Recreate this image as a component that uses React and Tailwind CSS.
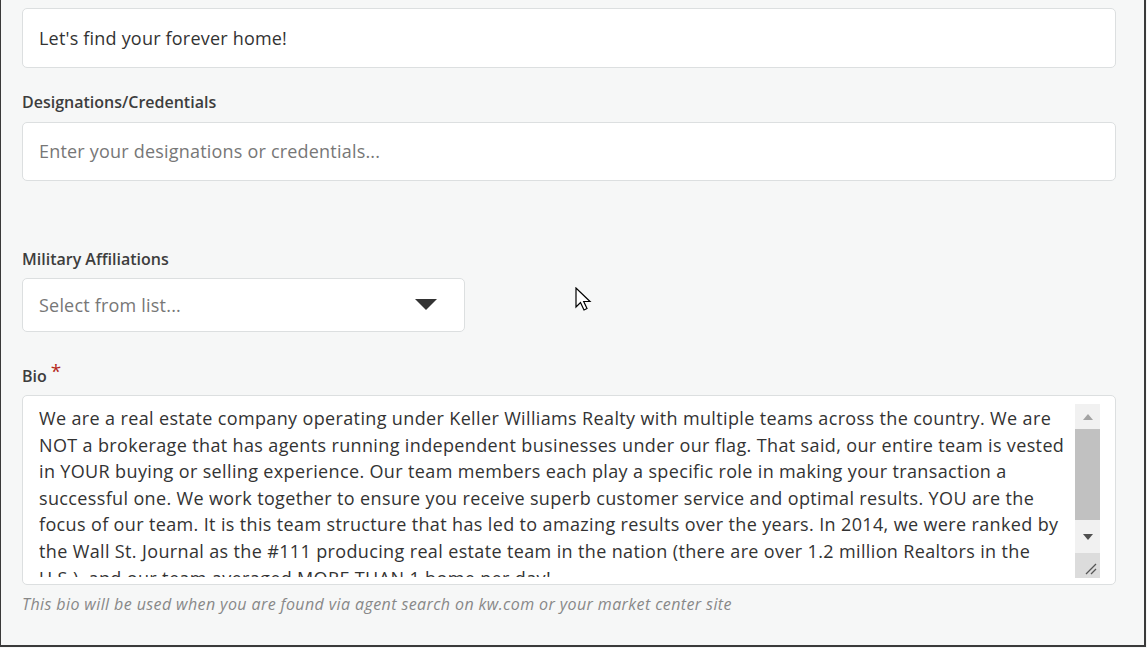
import React from "react";

const font = { fontFamily: "'Open Sans', sans-serif" };

const lines = [
  "We are a real estate company operating under Keller Williams Realty with multiple teams across the country. We are",
  "NOT a brokerage that has agents running independent businesses under our flag. That said, our entire team is vested",
  "in YOUR buying or selling experience. Our team members each play a specific role in making your transaction a",
  "successful one. We work together to ensure you receive superb customer service and optimal results. YOU are the",
  "focus of our team. It is this team structure that has led to amazing results over the years. In 2014, we were ranked by",
  "the Wall St. Journal as the #111 producing real estate team in the nation (there are over 1.2 million Realtors in the",
  "U.S.), and our team averaged MORE THAN 1 home per day!",
];

export default function App() {
  return (
    <div className="w-[1147px] h-[648px] bg-[#f6f7f7] pr-[1px]">
      <div
        className="relative w-full h-[647px] bg-[#f6f7f7] border-l border-r-2 border-b-2 border-[#3a3a3a] overflow-hidden"
        style={font}
      >
        <div className="pl-[21px] pr-[28px] pt-[8px] flex flex-col">
          <div className="h-[60px] bg-white border border-[#dcdfe0] rounded-[5px] flex items-center px-4 text-[18px] tracking-[0.2px] text-[#333]">
            Let's find your forever home!
          </div>
          <div className="mt-[24px] text-[16px] font-semibold text-[#3d3d3d] leading-[20px]">
            Designations/Credentials
          </div>
          <div className="mt-[10px] h-[59px] bg-white border border-[#dcdfe0] rounded-[5px] flex items-center px-4 text-[18px] tracking-[0.2px] text-[#777]">
            Enter your designations or credentials...
          </div>
          <div className="mt-[68px] text-[16px] font-semibold text-[#3d3d3d] leading-[20px]">
            Military Affiliations
          </div>
          <div className="mt-[9px] w-[443px] h-[54px] bg-white border border-[#dcdfe0] rounded-[5px] flex items-center justify-between pl-4 pr-[27px] text-[18px] tracking-[0.2px] text-[#777]">
            <span>Select from list...</span>
            <svg width="22" height="12" viewBox="0 0 22 12">
              <path d="M0 0 H22 L11 11 Z" fill="#333" />
            </svg>
          </div>
          <div className="mt-[34px] text-[16px] font-semibold text-[#3d3d3d] leading-[20px] flex items-start">
            Bio<span className="text-[#b5291c] text-[19px] font-normal ml-[4px] -mt-[5px]">*</span>
          </div>
          <div className="mt-[9px] h-[190px] bg-white border border-[#dcdfe0] rounded-[5px] flex pl-4 pr-[15px] pt-[9px] pb-[7px]">
            <div className="flex-1 overflow-hidden text-[18px] tracking-[0.36px] leading-[26.6px] text-[#333] whitespace-nowrap">
              {lines.map((l, i) => (
                <div key={i}>{l}</div>
              ))}
            </div>
            <div className="w-[25px] h-[174px] -mt-[1px] bg-[#f1f1f1] flex flex-col">
              <div className="h-[25px] flex items-center justify-center">
                <svg width="10" height="6" viewBox="0 0 10 6">
                  <path d="M0 6 L5 0 L10 6 Z" fill="#a3a3a3" />
                </svg>
              </div>
              <div className="h-[91px] bg-[#c1c1c1]" />
              <div className="h-[33px] flex items-center justify-center">
                <svg width="10" height="6" viewBox="0 0 10 6">
                  <path d="M0 0 L10 0 L5 6 Z" fill="#505050" />
                </svg>
              </div>
              <div className="flex-1 bg-[#dcdcdc] relative">
                <svg className="absolute right-[3px] bottom-[3px]" width="12" height="12" viewBox="0 0 12 12">
                  <path d="M11 1 L1 11 M11 6 L6 11" stroke="#555" strokeWidth="1.3" />
                </svg>
              </div>
            </div>
          </div>
          <div className="mt-[7px] text-[16px] tracking-[0.4px] italic text-[#888]">
            This bio will be used when you are found via agent search on kw.com or your market center site
          </div>
        </div>
        <svg className="absolute left-[574px] top-[287px]" width="18" height="26" viewBox="0 0 18 26">
          <path d="M1 1 L1 20 L5.5 15.5 L9 23 L12 21.5 L8.7 14.5 L15 14.5 Z" fill="#fff" stroke="#000" strokeWidth="1.2" strokeLinejoin="miter" />
        </svg>
      </div>
    </div>
  );
}
